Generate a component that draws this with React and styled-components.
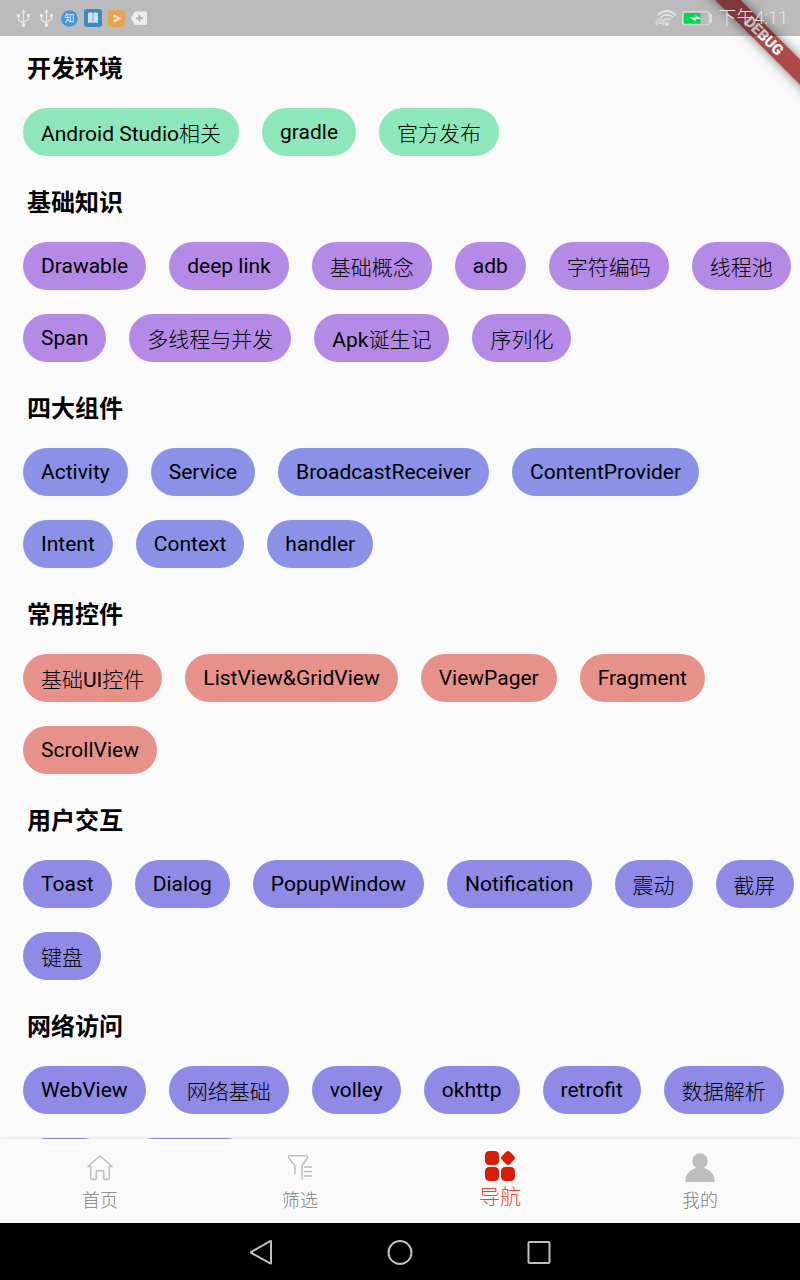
import React from "react";
import styled, { createGlobalStyle } from "styled-components";

const GlobalStyle = createGlobalStyle`
  * { box-sizing: border-box; }
  body {
    margin: 0;
    background: #fafafa;
    font-family: Roboto, "Noto Sans CJK SC", sans-serif;
    color: #000;
  }
  button { font: inherit; color: inherit; border: 0; margin: 0; cursor: pointer; }
`;

const Screen = styled.div`
  position: relative;
  height: 100vh;
  display: flex;
  flex-direction: column;
  overflow: hidden;
`;

const StatusBar = styled.header`
  position: relative;
  z-index: 2;
  flex: none;
  height: 36px;
  padding: 0 12px 0 15px;
  display: flex;
  align-items: center;
  justify-content: space-between;
  background: rgba(0, 0, 0, 0.25);
`;

const StatusGroup = styled.div`
  display: flex;
  align-items: center;
  gap: ${(p) => p.$gap}px;
  svg { display: block; }
`;

const Clock = styled.time`
  font-size: 18px;
  font-weight: 300;
  line-height: 24px;
  color: #e6e6e6;
`;

const BannerCorner = styled.div`
  position: absolute;
  z-index: 1;
  top: 0;
  right: 0;
  width: 120px;
  height: 120px;
  overflow: hidden;
  pointer-events: none;
`;

const BannerRibbon = styled.div`
  position: absolute;
  top: 42px;
  left: 30px;
  width: 180px;
  height: 18px;
  transform-origin: 90px -42px;
  transform: rotate(45deg);
  background: #ad4a4a;
  box-shadow: 0 0 12px rgba(0, 0, 0, 0.5);
  color: #fff;
  font-size: 15px;
  font-weight: 900;
  line-height: 18px;
  text-align: center;
`;

const List = styled.main`
  flex: 1;
  min-height: 0;
  overflow: hidden;
`;

const Section = styled.section`
  padding: 15px 0 14px 23px;
`;

const Heading = styled.h2`
  margin: 0 0 21px;
  padding-left: 4px;
  font-size: 24px;
  font-weight: 700;
  line-height: 36px;
`;

const Chips = styled.div`
  display: flex;
  flex-wrap: wrap;
  gap: 24px 23px;
`;

const Chip = styled.button`
  height: 48px;
  padding: ${(p) => (p.$cjk ? 4 : 0)}px 18px 0;
  border-radius: 24px;
  background: ${(p) => p.$color};
  font-size: 21px;
  line-height: 24px;
  white-space: nowrap;
`;

const Han = styled.span`
  font-weight: 300;
`;

const TabBar = styled.nav`
  position: relative;
  flex: none;
  height: 84px;
  display: flex;
  background: #fafafa;
  box-shadow: 0 -1px 3px rgba(0, 0, 0, 0.1);
`;

const Tab = styled.button`
  flex: 1;
  padding: ${(p) => (p.$active ? 10 : 13)}px 0 0;
  display: flex;
  flex-direction: column;
  align-items: center;
  gap: ${(p) => (p.$active ? 2 : 5)}px;
  background: none;
  color: ${(p) => (p.$active ? "#f44336" : "#808080")};
  font-size: ${(p) => (p.$active ? 21 : 18)}px;
  font-weight: 300;
  line-height: 28px;
  svg { display: block; }
`;

const SystemBar = styled.footer`
  flex: none;
  height: 57px;
  display: flex;
  align-items: center;
  justify-content: center;
  gap: 109px;
  background: #000;
`;

const SystemButton = styled.button`
  padding: 0;
  background: none;
  svg { display: block; }
`;

const sections = [
  ["开发环境", "#8de7bb", ["Android Studio相关", "gradle", "官方发布"]],
  ["基础知识", "#b58ae6", ["Drawable", "deep link", "基础概念", "adb", "字符编码", "线程池", "Span", "多线程与并发", "Apk诞生记", "序列化"]],
  ["四大组件", "#8a91e6", ["Activity", "Service", "BroadcastReceiver", "ContentProvider", "Intent", "Context", "handler"]],
  ["常用控件", "#e6918a", ["基础UI控件", "ListView&GridView", "ViewPager", "Fragment", "ScrollView"]],
  ["用户交互", "#8f8ae6", ["Toast", "Dialog", "PopupWindow", "Notification", "震动", "截屏", "键盘"]],
  ["网络访问", "#8f8ae6", ["WebView", "网络基础", "volley", "okhttp", "retrofit", "数据解析", "Glide", "网络框架"]],
];

const hanRun = /([\u4e00-\u9fff]+)/;

function Label({ text }) {
  return text.split(hanRun).map((part, i) => (hanRun.test(part) ? <Han key={i}>{part}</Han> : part));
}

const Usb = () => (
  <svg width="17" height="20" viewBox="0 0 17 20" fill="none" stroke="#e8e8e8" strokeWidth="1.3">
    <path d="M8.500 3v14M3.500 7v4.500q0 1.500 5 3.200M13.500 7v3.500q0 1.800-5 3.200" />
    <path d="M8.500 1l2.200 3.400H6.300z" fill="#e8e8e8" stroke="none" />
    <circle cx="8.500" cy="17" r="1.900" fill="#e8e8e8" stroke="none" />
    <circle cx="3.500" cy="7.500" r="1.700" fill="#e8e8e8" stroke="none" />
    <rect x="12" y="6" width="3" height="3" fill="#e8e8e8" stroke="none" />
  </svg>
);

const Zhi = () => (
  <svg width="17" height="17" viewBox="0 0 17 17">
    <circle cx="8.500" cy="8.500" r="8.300" fill="#4296e0" />
    <text x="8.500" y="12" fontSize="10" fill="#e8f0f8" textAnchor="middle">知</text>
  </svg>
);

const Book = () => (
  <svg width="18" height="18" viewBox="0 0 18 18">
    <rect width="18" height="18" rx="3" fill="#3b8cc4" />
    <path d="M4 4q2.500-1.300 4.700 0v10q-2.200-1.200-4.700 0zM9.300 4q2.200-1.300 4.700 0v10q-2.500-1.200-4.700 0z" fill="#d5e2ea" />
  </svg>
);

const Play = () => (
  <svg width="17" height="17" viewBox="0 0 17 17">
    <rect width="17" height="17" rx="3.500" fill="#e6a450" />
    <path d="M6.200 8V5.300l5.600 3.300-5.600 3.400M5.800 11l2.800-1.800" fill="none" stroke="#f8eee0" strokeWidth="1.400" />
  </svg>
);

const PlusTag = () => (
  <svg width="17" height="15" viewBox="0 0 17 15">
    <path d="M5 .5h9.500q1.500 0 1.500 1.500v10.500q0 1.500-1.500 1.500H5Q3.800 14 3 12.700L.6 8.600q-.7-1.300 0-2.600L3 1.800Q3.800.5 5 .5z" fill="#ececec" />
    <path d="M8.500 4v6.500M5.200 7.200h6.600" stroke="#b0b0b0" strokeWidth="2" />
  </svg>
);

const Wifi = () => (
  <svg width="22" height="18" viewBox="0 0 22 18" fill="none" stroke="#e6e6e6">
    <path d="M2.500 6.200q9-8.400 18.500 0M5.500 8.400q6.500-5.200 12.800 0M9 11q3.200-2 6.200 0" strokeWidth="1.700" />
    <circle cx="12" cy="15" r="1.900" fill="#e6e6e6" stroke="none" />
    <path d="M2.300 16.500a4 4 0 1 1 5.500 0M3.500 15a2.200 2.200 0 1 1 3.200 0" strokeWidth="1" />
    <circle cx="5.100" cy="14" r="1" fill="#e6e6e6" stroke="none" />
  </svg>
);

const Battery = () => (
  <svg width="31" height="15" viewBox="0 0 31 15">
    <rect x=".75" y=".75" width="26.500" height="13" rx="1.500" fill="none" stroke="#e0e0e0" strokeWidth="1.200" />
    <rect x="2" y="2" width="16.500" height="10.500" fill="#00d957" />
    <rect x="28" y="3.500" width="2" height="8" fill="#e0e0e0" />
    <path d="M7.500 6.300l6.500.4-.7-2.600 6.700 4.200-6.500-.3.700 2.600z" fill="#f2f2f2" />
  </svg>
);

const Home = () => (
  <svg width="30" height="30" viewBox="-1 -1 30 30" fill="none" stroke="#bfbfbf" strokeWidth="1.500" strokeLinejoin="round" strokeLinecap="round">
    <path d="M2 13.500L14 2.800l12 10.700h-2.700v12q0 1-1 1h-3.600q-1 0-1-1v-6.800q0-1-1-1h-5.400q-1 0-1 1v6.800q0 1-1 1H5.700q-1 0-1-1v-12z" />
  </svg>
);

const Filter = () => (
  <svg width="30" height="30" viewBox="-1 -1 30 30" fill="none" stroke="#bfbfbf" strokeWidth="1.500" strokeLinejoin="round">
    <path d="M9 21.500v-8.800L3 5.500Q1.500 2.700 4 2.700h16q2.500 0 1 2.800l-5 7.200v14" />
    <path d="M18 14h8M18 18.500h8M18 23h8" />
  </svg>
);

const Grid = () => (
  <svg width="32" height="32" viewBox="0 0 32 32" fill="#d81e06">
    <rect x="1" y="2" width="14" height="14" rx="4.200" />
    <rect x="1" y="18" width="14" height="14" rx="4.200" />
    <rect x="17" y="18" width="14" height="14" rx="4.200" />
    <rect x="18.300" y="3.300" width="11.400" height="11.400" rx="3" transform="rotate(45 24 9)" />
  </svg>
);

const Person = () => (
  <svg width="30" height="30" viewBox="0 0 30 30" fill="#bfbfbf">
    <circle cx="15" cy="9" r="7.800" />
    <path d="M.3 29.500Q.3 23 5.200 19q4-3.800 9.800-3.800T24.800 19q4.900 4 4.900 10.500 0 .5-.7.500H1q-.7 0-.7-.5z" />
  </svg>
);

const tabs = [
  ["首页", Home],
  ["筛选", Filter],
  ["导航", Grid],
  ["我的", Person],
];

const systemKeys = [
  ["Back", <path d="M25 3.500v21.500q0 .8-.8.400L5.300 14.900q-.8-.5 0-1L24.200 3.100q.8-.4.800.4z" />],
  ["Home", <circle cx="15" cy="14.500" r="11.500" />],
  ["Recents", <rect x="4.500" y="4" width="21" height="21" rx="1" />],
];

export default function App() {
  return (
    <Screen>
      <GlobalStyle />
      <StatusBar>
        <StatusGroup $gap={6}>
          <Usb />
          <Usb />
          <Zhi />
          <Book />
          <Play />
          <PlusTag />
        </StatusGroup>
        <StatusGroup $gap={5}>
          <Wifi />
          <Battery />
          <Clock>下午4:11</Clock>
        </StatusGroup>
      </StatusBar>
      <BannerCorner>
        <BannerRibbon>DEBUG</BannerRibbon>
      </BannerCorner>
      <List>
        {sections.map(([title, color, items]) => (
          <Section key={title}>
            <Heading>{title}</Heading>
            <Chips>
              {items.map((item) => (
                <Chip key={item} type="button" $color={color} $cjk={hanRun.test(item)}>
                  <Label text={item} />
                </Chip>
              ))}
            </Chips>
          </Section>
        ))}
      </List>
      <TabBar>
        {tabs.map(([name, Icon]) => (
          <Tab key={name} type="button" $active={name === "导航"}>
            <Icon />
            {name}
          </Tab>
        ))}
      </TabBar>
      <SystemBar>
        {systemKeys.map(([name, shape]) => (
          <SystemButton key={name} type="button" aria-label={name}>
            <svg width="30" height="28" viewBox="0 0 30 28" fill="none" stroke="#c0c0c0" strokeWidth="2">
              {shape}
            </svg>
          </SystemButton>
        ))}
      </SystemBar>
    </Screen>
  );
}
